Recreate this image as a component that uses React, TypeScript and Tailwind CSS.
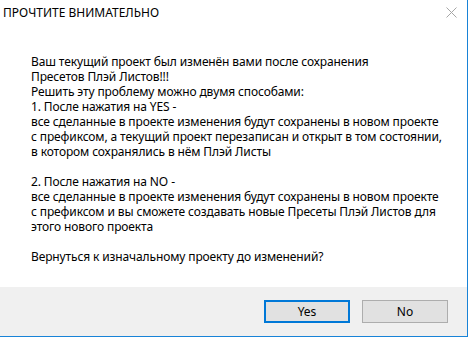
import React from "react";

const lines = [
  "Ваш текущий проект был изменён вами после сохранения",
  "Пресетов Плэй Листов!!!",
  "Решить эту проблему можно двумя способами:",
  "1. После нажатия на YES -",
  "все сделанные в проекте изменения будут сохранены в новом проекте",
  "с префиксом, а текущий проект перезаписан и открыт в том состоянии,",
  "в котором сохранялись в нём Плэй Листы",
  "",
  "2. После нажатия на NO -",
  "все сделанные в проекте изменения будут сохранены в новом проекте",
  "с префиксом и вы сможете создавать новые Пресеты Плэй Листов для",
  "этого нового проекта",
  "",
  "Вернуться к изначальному проекту до изменений?",
];

export default function App() {
  return (
    <div
      className="w-[469px] h-[337px] bg-white text-[12px] text-black"
      style={{ fontFamily: '"Noto Sans", "Open Sans", sans-serif' }}
    >
      <div className="w-[468px] h-[337px] border-r border-b border-[#1883d7] flex flex-col">
        <div className="h-[24px] flex items-center justify-between pl-[3px]">
          <span className="leading-[15px]">ПРОЧТИТЕ ВНИМАТЕЛЬНО</span>
          <svg width="11" height="11" viewBox="0 0 11 11" className="mr-[10px]">
            <path d="M0.5 0.5 L10.5 10.5 M10.5 0.5 L0.5 10.5" stroke="#a6a6a6" strokeWidth="1" fill="none" />
          </svg>
        </div>
        <div className="flex-1 pl-[31px] pt-[30px] tracking-[-0.12px]">
          {lines.map((l, i) => (
            <div key={i} className="h-[15px] leading-[15px] whitespace-pre">
              {l}
            </div>
          ))}
        </div>
        <div className="h-[49px] bg-[#f0f0f0] flex justify-end items-start pt-[13px] pr-[19px] gap-[12px]">
          <button className="w-[86px] h-[23px] bg-[#e1e1e1] border-2 border-[#0078d7] flex items-center justify-center leading-[15px]">
            Yes
          </button>
          <button className="w-[86px] h-[23px] bg-[#e1e1e1] border border-[#adadad] flex items-center justify-center leading-[15px]">
            No
          </button>
        </div>
      </div>
    </div>
  );
}
